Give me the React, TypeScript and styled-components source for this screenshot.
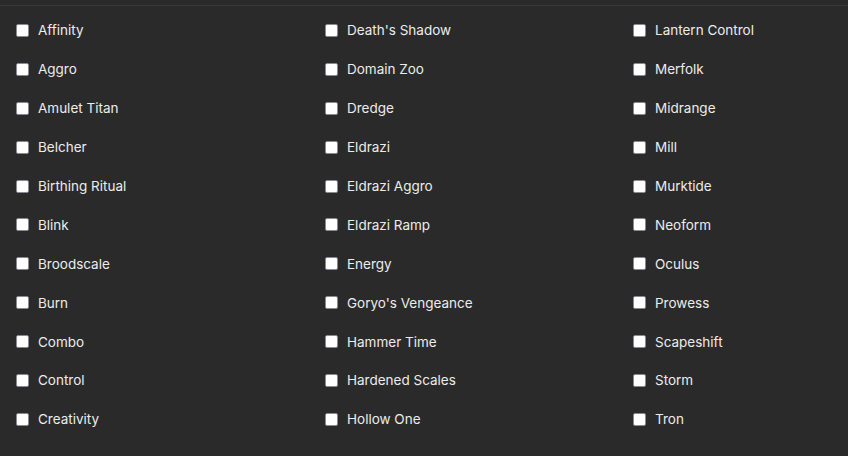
import React from "react";
import styled, { createGlobalStyle } from "styled-components";

const Global = createGlobalStyle`
  html, body { margin: 0; padding: 0; background: #2a2a2a; }
  body { font-family: Inter, "Noto Sans", sans-serif; }
`;

const Page = styled.div`
  width: 848px;
  height: 456px;
  background: #2a2a2a;
  box-sizing: border-box;
  padding-top: 5px;
  overflow: hidden;
`;

const Panel = styled.div`
  border-top: 1px solid #383838;
  padding: 5px 0 0 16px;
  display: grid;
  grid-template-columns: 309px 308px 1fr;
  grid-template-rows: repeat(11, 38.9px);
  grid-auto-flow: column;
`;

const Option = styled.label`
  display: flex;
  align-items: center;
  gap: 9px;
  color: #ececec;
  font-size: 13.5px;
  letter-spacing: 0;
  cursor: pointer;
`;

const Box = styled.input`
  appearance: none;
  width: 13px;
  height: 13px;
  margin: 0;
  box-sizing: border-box;
  background: #ffffff;
  border: 1px solid #8a8a96;
  border-radius: 2px;
  flex: none;
`;

const decks = [
  "Affinity", "Aggro", "Amulet Titan", "Belcher", "Birthing Ritual", "Blink", "Broodscale", "Burn", "Combo", "Control", "Creativity",
  "Death's Shadow", "Domain Zoo", "Dredge", "Eldrazi", "Eldrazi Aggro", "Eldrazi Ramp", "Energy", "Goryo's Vengeance", "Hammer Time", "Hardened Scales", "Hollow One",
  "Lantern Control", "Merfolk", "Midrange", "Mill", "Murktide", "Neoform", "Oculus", "Prowess", "Scapeshift", "Storm", "Tron",
];

export default function App() {
  return (
    <Page>
      <Global />
      <Panel>
        {decks.map((d) => (
          <Option key={d}>
            <Box type="checkbox" />
            {d}
          </Option>
        ))}
      </Panel>
    </Page>
  );
}
